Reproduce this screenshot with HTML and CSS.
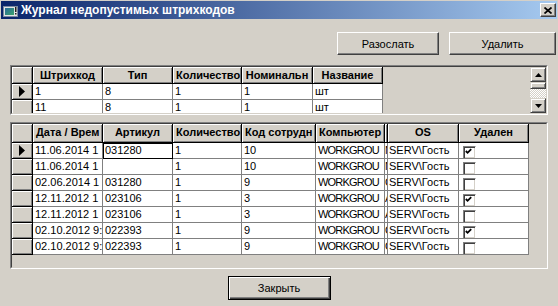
FILE: index.html
```html
<!DOCTYPE html>
<html lang="ru">
  <head>
    <meta charset="UTF-8" />
    <title>Журнал недопустимых штрихкодов</title>
    <link rel="stylesheet" href="styles.css">
  </head>
  <body>
    <div class="window">
      <!-- Title bar -->
      <div class="titlebar">
        <svg class="app-icon" width="15" height="11" viewBox="0 0 15 11">
          <defs>
            <linearGradient id="icon-fill" x1="0" y1="0" x2="1" y2="1">
              <stop offset="0" stop-color="#2a6a9a" />
              <stop offset="1" stop-color="#3aa46c" />
            </linearGradient>
          </defs>
          <rect x="0.5" y="0.5" width="14" height="10" fill="#e4e4e4" stroke="#7a8aa0" />
          <rect x="2" y="2" width="9" height="7" fill="url(#icon-fill)" />
          <rect x="12" y="1" width="1.5" height="5" fill="#202020" />
          <rect x="12" y="7" width="1.5" height="1.5" fill="#202020" />
        </svg>
        <span class="title">Журнал недопустимых штрихкодов</span>
        <button class="title-close" type="button">
          <svg width="8" height="7" viewBox="0 0 8 7">
            <path d="M0.5 0.5 L7.5 6.5 M7.5 0.5 L0.5 6.5" stroke="#000" stroke-width="1.7" />
          </svg>
        </button>
      </div>

      <!-- Actions -->
      <div class="toolbar">
        <button class="btn btn-send" type="button">Разослать</button>
        <button class="btn btn-delete" type="button">Удалить</button>
      </div>

      <!-- Barcodes grid -->
      <div class="grid-frame grid-top">
        <div class="grid-inner">
          <div class="grid grid-codes">
            <div class="cell fixed"></div>
            <div class="cell fixed caption">Штрихкод</div>
            <div class="cell fixed caption">Тип</div>
            <div class="cell fixed caption">Количество</div>
            <div class="cell fixed caption">Номинальн</div>
            <div class="cell fixed caption">Название</div>

            <div class="cell fixed indicator"><svg width="7" height="11" viewBox="0 0 7 11"><polygon points="0,0 6,5.5 0,11" fill="#000" /></svg></div>
            <div class="cell">1</div>
            <div class="cell">8</div>
            <div class="cell">1</div>
            <div class="cell">1</div>
            <div class="cell">шт</div>

            <div class="cell fixed"></div>
            <div class="cell">11</div>
            <div class="cell">8</div>
            <div class="cell">1</div>
            <div class="cell">1</div>
            <div class="cell">шт</div>
          </div>
          <div class="vscroll">
            <div class="sb-btn"><svg width="7" height="4" viewBox="0 0 7 4"><polygon points="0,4 3.5,0 7,4" fill="#000" /></svg></div>
            <div class="sb-thumb"></div>
            <div class="sb-track"></div>
            <div class="sb-btn"><svg width="7" height="4" viewBox="0 0 7 4"><polygon points="0,0 3.5,4 7,0" fill="#000" /></svg></div>
          </div>
        </div>
      </div>

      <!-- Log grid -->
      <div class="grid-frame grid-bottom">
        <div class="grid-inner">
          <div class="grid grid-log">
            <div class="cell fixed"></div>
            <div class="cell fixed caption">Дата / Врем</div>
            <div class="cell fixed caption">Артикул</div>
            <div class="cell fixed caption">Количество</div>
            <div class="cell fixed caption">Код сотрудн</div>
            <div class="cell fixed caption">Компьютер</div>
            <div class="cell fixed narrow"></div>
            <div class="cell fixed caption">OS</div>
            <div class="cell fixed caption">Удален</div>

            <div class="cell fixed indicator"><svg width="7" height="11" viewBox="0 0 7 11"><polygon points="0,0 6,5.5 0,11" fill="#000" /></svg></div>
            <div class="cell">11.06.2014 1</div>
            <div class="cell focus">031280</div>
            <div class="cell">1</div>
            <div class="cell">10</div>
            <div class="cell host">WORKGROU</div>
            <div class="cell narrow">N</div>
            <div class="cell os">SERV\Гость</div>
            <div class="cell flag"><span class="check"><svg width="7" height="7" viewBox="0 0 7 7"><polyline points="0.8,3 2.6,4.8 6.2,1.2" fill="none" stroke="#000" stroke-width="1.8" /></svg></span></div>

            <div class="cell fixed"></div>
            <div class="cell">11.06.2014 1</div>
            <div class="cell"></div>
            <div class="cell">1</div>
            <div class="cell">10</div>
            <div class="cell host">WORKGROU</div>
            <div class="cell narrow">N</div>
            <div class="cell os">SERV\Гость</div>
            <div class="cell flag"><span class="check"></span></div>

            <div class="cell fixed"></div>
            <div class="cell">02.06.2014 1</div>
            <div class="cell">031280</div>
            <div class="cell">1</div>
            <div class="cell">9</div>
            <div class="cell host">WORKGROU</div>
            <div class="cell narrow">C</div>
            <div class="cell os">SERV\Гость</div>
            <div class="cell flag"><span class="check"></span></div>

            <div class="cell fixed"></div>
            <div class="cell">12.11.2012 1</div>
            <div class="cell">023106</div>
            <div class="cell">1</div>
            <div class="cell">3</div>
            <div class="cell host">WORKGROU</div>
            <div class="cell narrow">A</div>
            <div class="cell os">SERV\Гость</div>
            <div class="cell flag"><span class="check"><svg width="7" height="7" viewBox="0 0 7 7"><polyline points="0.8,3 2.6,4.8 6.2,1.2" fill="none" stroke="#000" stroke-width="1.8" /></svg></span></div>

            <div class="cell fixed"></div>
            <div class="cell">12.11.2012 1</div>
            <div class="cell">023106</div>
            <div class="cell">1</div>
            <div class="cell">3</div>
            <div class="cell host">WORKGROU</div>
            <div class="cell narrow">A</div>
            <div class="cell os">SERV\Гость</div>
            <div class="cell flag"><span class="check"></span></div>

            <div class="cell fixed"></div>
            <div class="cell">02.10.2012 9:</div>
            <div class="cell">022393</div>
            <div class="cell">1</div>
            <div class="cell">9</div>
            <div class="cell host">WORKGROU</div>
            <div class="cell narrow">C</div>
            <div class="cell os">SERV\Гость</div>
            <div class="cell flag"><span class="check"><svg width="7" height="7" viewBox="0 0 7 7"><polyline points="0.8,3 2.6,4.8 6.2,1.2" fill="none" stroke="#000" stroke-width="1.8" /></svg></span></div>

            <div class="cell fixed"></div>
            <div class="cell">02.10.2012 9:</div>
            <div class="cell">022393</div>
            <div class="cell">1</div>
            <div class="cell">9</div>
            <div class="cell host">WORKGROU</div>
            <div class="cell narrow">C</div>
            <div class="cell os">SERV\Гость</div>
            <div class="cell flag"><span class="check"></span></div>
          </div>
        </div>
      </div>

      <div class="footer">
        <button class="btn btn-default" type="button">Закрыть</button>
      </div>
    </div>
  </body>
</html>
```

FILE: styles.css
```css
* {
  box-sizing: border-box;
}

body {
  margin: 0;
  background: #d4d0c8;
  font-family: "Liberation Sans", Arial, sans-serif;
  font-size: 11px;
  color: #000;
  overflow: hidden;
}

.window {
  width: 558px;
  height: 306px;
}

/* Title bar */
.titlebar {
  display: flex;
  align-items: center;
  height: 18px;
  margin: 1px 1px 0;
  padding: 0 1px 0 2px;
  background: linear-gradient(90deg, #0a246a 0%, #a6caf0 100%);
  color: #fff;
}

.app-icon {
  margin-top: 2px;
  flex: none;
}

.title {
  flex: 1;
  margin-left: 3px;
  padding-top: 1px;
  font-size: 12px;
  font-weight: bold;
  line-height: 17px;
  white-space: nowrap;
}

.title-close {
  display: flex;
  align-items: center;
  justify-content: center;
  width: 16px;
  height: 14px;
  padding: 0;
  background: #d4d0c8;
  border: 1px solid;
  border-color: #fff #404040 #404040 #fff;
  box-shadow: inset -1px -1px 0 #808080;
}

/* Buttons */
.toolbar {
  display: flex;
  justify-content: flex-end;
  gap: 10px;
  padding: 13px 2px 0 0;
}

.btn {
  height: 23px;
  padding: 0;
  font-family: "Liberation Sans", Arial, sans-serif;
  font-size: 11px;
  color: #000;
  background: #d4d0c8;
  border: 1px solid;
  border-color: #fff #404040 #404040 #fff;
  box-shadow: inset -1px -1px 0 #808080;
}

.btn-send {
  width: 102px;
}

.btn-delete {
  width: 107px;
}

.btn-default {
  width: 103px;
  height: 24px;
  border-color: #000;
  box-shadow: inset 1px 1px 0 #fff, inset -1px -1px 0 #404040, inset -2px -2px 0 #808080;
}

/* Grids */
.grid-frame {
  margin: 0 10px;
  border: 1px solid;
  border-color: #808080 #fff #fff #808080;
}

.grid-top {
  height: 50px;
  margin-top: 10px;
}

.grid-bottom {
  height: 147px;
  margin-top: 7px;
}

.grid-inner {
  display: flex;
  height: 100%;
  border: 1px solid;
  border-color: #404040 #d4d0c8 #d4d0c8 #404040;
  background: #d4d0c8;
  overflow: hidden;
}

.grid {
  display: grid;
  flex: 1;
  grid-template-rows: 17px;
  grid-auto-rows: 16px;
  align-content: start;
}

.grid-codes {
  grid-template-columns: 21px 70px 70px 69px 71px 70px;
}

.grid-log {
  grid-template-rows: 19px;
  grid-template-columns: 21px 70px 70px 69px 74px 69px 3px 71px 70px;
}

.cell {
  padding: 0 2px;
  background: #fff;
  border-right: 1px solid #808080;
  border-bottom: 1px solid #808080;
  line-height: 15px;
  white-space: nowrap;
  overflow: hidden;
}

.fixed {
  background: #d4d0c8;
  border-color: #000;
  box-shadow: inset 1px 1px 0 #fff, inset -1px -1px 0 #808080;
}

.caption {
  padding: 0 3px;
  font-weight: bold;
  line-height: 16px;
  text-align: center;
}

.grid-log .caption {
  line-height: 17px;
}

.indicator {
  display: flex;
  align-items: center;
  justify-content: center;
}

.host {
  letter-spacing: -0.8px;
}

.narrow {
  padding: 0;
}

.os {
  padding-left: 1px;
}

.focus {
  outline: 1px solid #000;
  outline-offset: -1px;
}

.flag {
  padding: 0;
}

.check {
  display: block;
  width: 13px;
  height: 13px;
  margin: 3px 0 0 4px;
  background: #fff;
  border: 1px solid;
  border-color: #808080 #fff #fff #808080;
  box-shadow: inset 1px 1px 0 #404040, inset -1px -1px 0 #d4d0c8;
}

.check svg {
  display: block;
  margin: 1px 0 0 1px;
}

/* Scroll bar of the top grid */
.vscroll {
  display: flex;
  flex-direction: column;
  width: 16px;
  flex: none;
}

.sb-btn,
.sb-thumb {
  background: #d4d0c8;
  border: 1px solid;
  border-color: #d4d0c8 #404040 #404040 #d4d0c8;
  box-shadow: inset 1px 1px 0 #fff, inset -1px -1px 0 #808080;
}

.sb-btn {
  display: flex;
  align-items: center;
  justify-content: center;
  height: 15px;
}

.sb-thumb {
  height: 7px;
}

.sb-track {
  flex: 1;
  background: repeating-conic-gradient(#fff 0 25%, #d4d0c8 0 50%) 0 0 / 2px 2px;
}

.footer {
  display: flex;
  justify-content: center;
  padding-top: 7px;
}
```
